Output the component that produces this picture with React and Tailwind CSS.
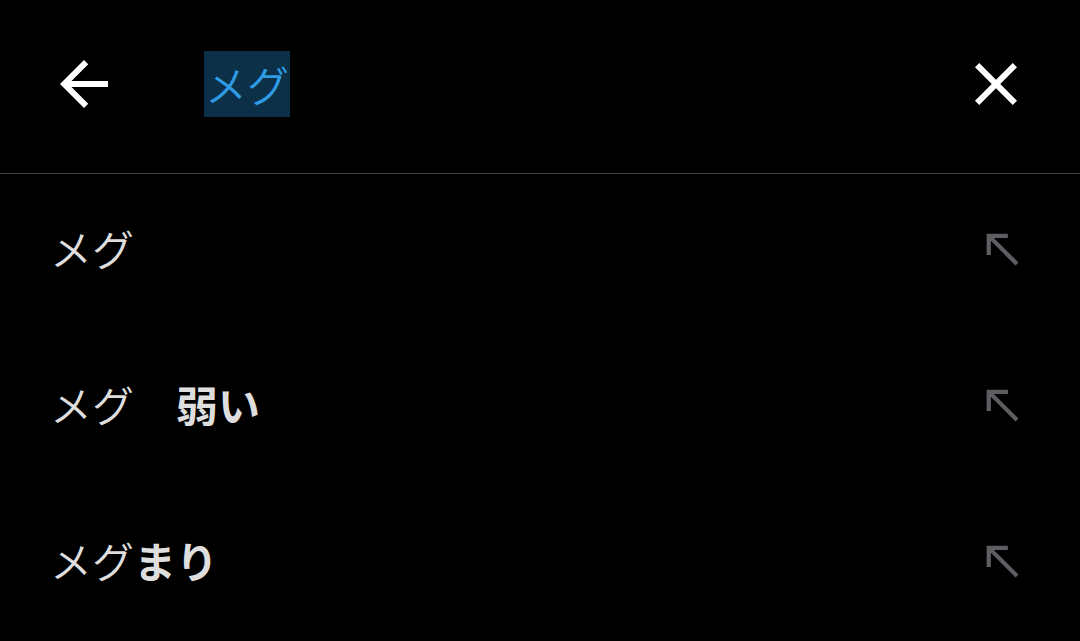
import React from "react";

const font = { fontFamily: '"Noto Sans CJK JP", "Noto Sans", sans-serif' };

function NorthWest() {
  return (
    <svg width="51" height="51" viewBox="0 0 24 24" fill="#5d5e61">
      <path d="M5 15h2V8.41L18.59 20 20 18.59 8.41 7H15V5H5z" />
    </svg>
  );
}

function Row({ children }) {
  return (
    <div className="flex items-center justify-between h-[156px] pb-[8px] pl-[50px] pr-[53px]">
      <div className="text-[42px] leading-none text-[#dedede] font-[350]" style={font}>
        {children}
      </div>
      <NorthWest />
    </div>
  );
}

export default function App() {
  return (
    <div className="w-[1080px] h-[641px] bg-black overflow-hidden" style={font}>
      <div className="flex items-center h-[174px] pb-[6px] border-b border-[#404040] pl-[48px] pr-[48px]">
        <svg width="72" height="72" viewBox="0 0 24 24" fill="#ffffff">
          <path d="M20 11H7.83l5.59-5.59L12 4l-8 8 8 8 1.41-1.41L7.83 13H20v-2z" />
        </svg>
        <div className="ml-[84px] flex-1 flex items-center">
          <span className="bg-[#0b3048] text-[#2f9be4] text-[42px] leading-[66px] h-[66px] px-[1px] font-[350]">
            メグ
          </span>
        </div>
        <svg width="72" height="72" viewBox="0 0 24 24" fill="#ffffff">
          <path d="M19 6.41L17.59 5 12 10.59 6.41 5 5 6.41 10.59 12 5 17.59 6.41 19 12 13.41 17.59 19 19 17.59 13.41 12z" />
        </svg>
      </div>
      <Row>メグ</Row>
      <Row>
        メグ　<span className="font-bold">弱い</span>
      </Row>
      <Row>
        メグ<span className="font-bold">まり</span>
      </Row>
    </div>
  );
}
